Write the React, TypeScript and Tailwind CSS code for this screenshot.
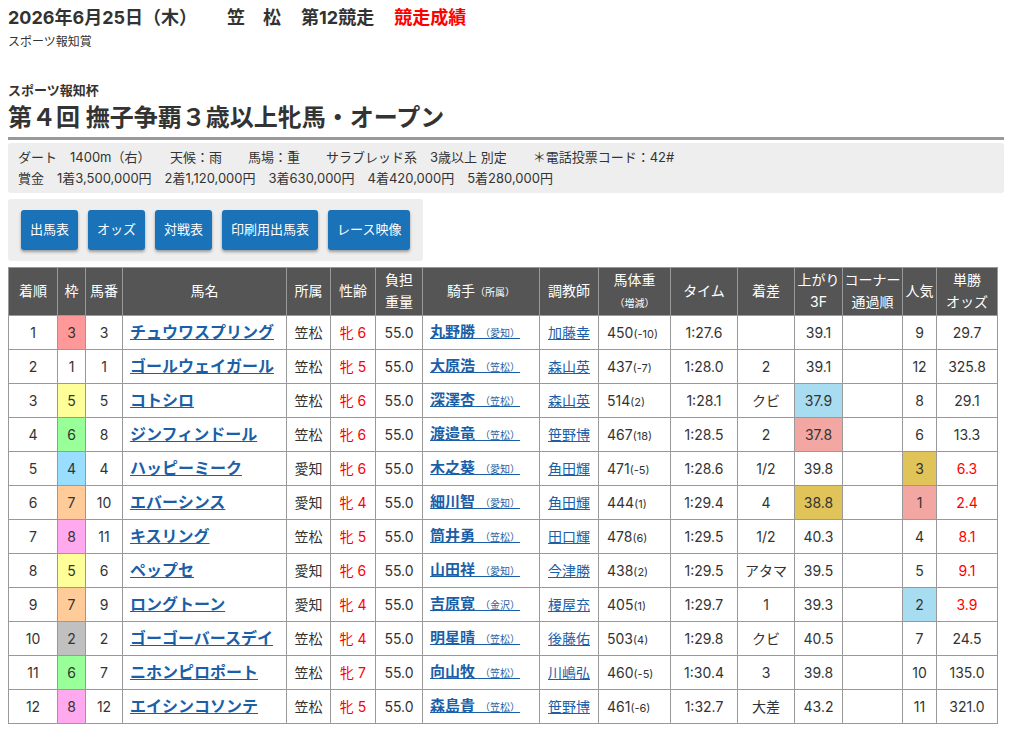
const rows: [string, number, number, string, string, string, string, string, string, string, string, string, string, string, number, string][] = [
  ["1", 3, 3, "チュウワスプリング", "笠松", "牝 6", "丸野勝", "愛知", "加藤幸", "450", "-10", "1:27.6", "", "39.1", 9, "29.7"],
  ["2", 1, 1, "ゴールウェイガール", "笠松", "牝 5", "大原浩", "笠松", "森山英", "437", "-7", "1:28.0", "2", "39.1", 12, "325.8"],
  ["3", 5, 5, "コトシロ", "笠松", "牝 6", "深澤杏", "笠松", "森山英", "514", "2", "1:28.1", "クビ", "37.9", 8, "29.1"],
  ["4", 6, 8, "ジンフィンドール", "笠松", "牝 6", "渡邉竜", "笠松", "笹野博", "467", "18", "1:28.5", "2", "37.8", 6, "13.3"],
  ["5", 4, 4, "ハッピーミーク", "愛知", "牝 6", "木之葵", "愛知", "角田輝", "471", "-5", "1:28.6", "1/2", "39.8", 3, "6.3"],
  ["6", 7, 10, "エバーシンス", "愛知", "牝 4", "細川智", "愛知", "角田輝", "444", "1", "1:29.4", "4", "38.8", 1, "2.4"],
  ["7", 8, 11, "キスリング", "笠松", "牝 5", "筒井勇", "笠松", "田口輝", "478", "6", "1:29.5", "1/2", "40.3", 4, "8.1"],
  ["8", 5, 6, "ペップセ", "愛知", "牝 6", "山田祥", "愛知", "今津勝", "438", "2", "1:29.5", "アタマ", "39.5", 5, "9.1"],
  ["9", 7, 9, "ロングトーン", "愛知", "牝 4", "吉原寛", "金沢", "榎屋充", "405", "1", "1:29.7", "1", "39.3", 2, "3.9"],
  ["10", 2, 2, "ゴーゴーバースデイ", "笠松", "牝 4", "明星晴", "笠松", "後藤佑", "503", "4", "1:29.8", "クビ", "40.5", 7, "24.5"],
  ["11", 6, 7, "ニホンピロポート", "笠松", "牝 7", "向山牧", "笠松", "川嶋弘", "460", "-5", "1:30.4", "3", "39.8", 10, "135.0"],
  ["12", 8, 12, "エイシンコソンテ", "笠松", "牝 5", "森島貴", "笠松", "笹野博", "461", "-6", "1:32.7", "大差", "43.2", 11, "321.0"],
];

const frameBg: Record<number, string> = {
  1: "bg-white", 2: "bg-[#c0c0c0]", 3: "bg-[#ff9999]", 4: "bg-[#99ddff]",
  5: "bg-[#ffff99]", 6: "bg-[#99ff99]", 7: "bg-[#ffcc99]", 8: "bg-[#ffaaee]",
};

const agariBg: Record<string, string> = { "37.9": "bg-[#a8dcf0]", "37.8": "bg-[#f2a7a3]", "38.8": "bg-[#e0c45a]" };
const popBg: Record<number, string> = { 3: "bg-[#e0c45a]", 1: "bg-[#f2a7a3]", 2: "bg-[#a8dcf0]" };

const td = "border border-[#999] text-center";
const th = "border border-[#999] font-normal text-white leading-[22px]";

export default function App() {
  return (
    <div className="bg-white text-[#333] px-[8px] pt-[4px] w-[1012px] h-[746px] overflow-hidden" style={{ fontFamily: "Inter, 'Noto Sans CJK JP', sans-serif" }}>
      <div className="flex items-baseline text-[18px] font-bold">
        <span>2026年6月25日（木）</span>
        <span className="ml-[30px]">笠　松</span>
        <span className="ml-[20px]">第12競走</span>
        <span className="ml-[20px] text-[#ff0000]">競走成績</span>
      </div>
      <div className="text-[12px] mt-[2px]">スポーツ報知賞</div>
      <div className="text-[13px] font-bold mt-[30px]">スポーツ報知杯</div>
      <div className="text-[24px] font-bold leading-[34px]">第４回 撫子争覇３歳以上牝馬・オープン</div>
      <div className="border-t-[3px] border-[#999] mt-[2px]" />
      <div className="bg-[#eeeeee] mt-[3px] rounded-[3px] px-[10px] py-[4px] text-[13px] leading-[21px]">
        <div className="whitespace-pre">ダート　1400m（右）　　天候：雨　　馬場：重　　サラブレッド系　3歳以上 別定　　＊電話投票コード：42#</div>
        <div className="whitespace-pre">賞金　1着3,500,000円　2着1,120,000円　3着630,000円　4着420,000円　5着280,000円</div>
      </div>
      <div className="bg-[#eeeeee] mt-[6px] rounded-[3px] inline-flex gap-[10px] px-[13px] py-[11px]">
        {["出馬表", "オッズ", "対戦表", "印刷用出馬表", "レース映像"].map((b) => (
          <div key={b} className="bg-[#1a73b8] text-white text-[13px] rounded-[3px] px-[9px] h-[40px] flex items-center shadow-[0_2px_3px_rgba(0,0,0,0.35)]">{b}</div>
        ))}
      </div>
      <table className="mt-[6px] border-collapse text-[14px] w-[990px]">
        <thead>
          <tr className="bg-[#555] h-[48px] text-[14px]">
            <th className={`${th} w-[49px]`}>着順</th>
            <th className={`${th} w-[28px]`}>枠</th>
            <th className={`${th} w-[37px]`}>馬番</th>
            <th className={`${th} w-[164px]`}>馬名</th>
            <th className={`${th} w-[44px]`}>所属</th>
            <th className={`${th} w-[45px]`}>性齢</th>
            <th className={`${th} w-[47px]`}>負担<br />重量</th>
            <th className={`${th} w-[117px]`}>騎手<span className="text-[10px]">（所属）</span></th>
            <th className={`${th} w-[59px]`}>調教師</th>
            <th className={`${th} w-[72px]`}>馬体重<br /><span className="text-[10px]">（増減）</span></th>
            <th className={`${th} w-[67px]`}>タイム</th>
            <th className={`${th} w-[57px]`}>着差</th>
            <th className={`${th} w-[48px]`}>上がり<br />3F</th>
            <th className={`${th} w-[60px]`}>コーナー<br />通過順</th>
            <th className={`${th} w-[34px]`}>人気</th>
            <th className={`${th} w-[61px]`}>単勝<br />オッズ</th>
          </tr>
        </thead>
        <tbody>
          {rows.map((r) => (
            <tr key={r[0]} className="h-[34px]">
              <td className={td}>{r[0]}</td>
              <td className={`${td} ${frameBg[r[1]]}`}>{r[1]}</td>
              <td className={td}>{r[2]}</td>
              <td className="border border-[#999] pl-[7px]"><span className="text-[#1a5fa8] font-bold underline text-[16px]">{r[3]}</span></td>
              <td className={td}>{r[4]}</td>
              <td className={`${td} text-[#ff0000]`}>{r[5]}</td>
              <td className={td}>55.0</td>
              <td className="border border-[#999] pl-[7px]">
                <span className="text-[#1a5fa8] underline"><span className="font-bold text-[15px]">{r[6]}</span><span className="text-[10px]">　（{r[7]}）</span></span>
              </td>
              <td className={td}><span className="text-[#1a5fa8] underline">{r[8]}</span></td>
              <td className="border border-[#999] pl-[8px]">{r[9]}<span className="text-[11px]">({r[10]})</span></td>
              <td className={td}>{r[11]}</td>
              <td className={td}>{r[12]}</td>
              <td className={`${td} ${agariBg[r[13]] ?? ""}`}>{r[13]}</td>
              <td className={td}></td>
              <td className={`${td} ${popBg[r[14]] ?? ""}`}>{r[14]}</td>
              <td className={`${td} ${Number(r[15]) < 10 ? "text-[#ff0000]" : ""}`}>{r[15]}</td>
            </tr>
          ))}
        </tbody>
      </table>
    </div>
  );
}
